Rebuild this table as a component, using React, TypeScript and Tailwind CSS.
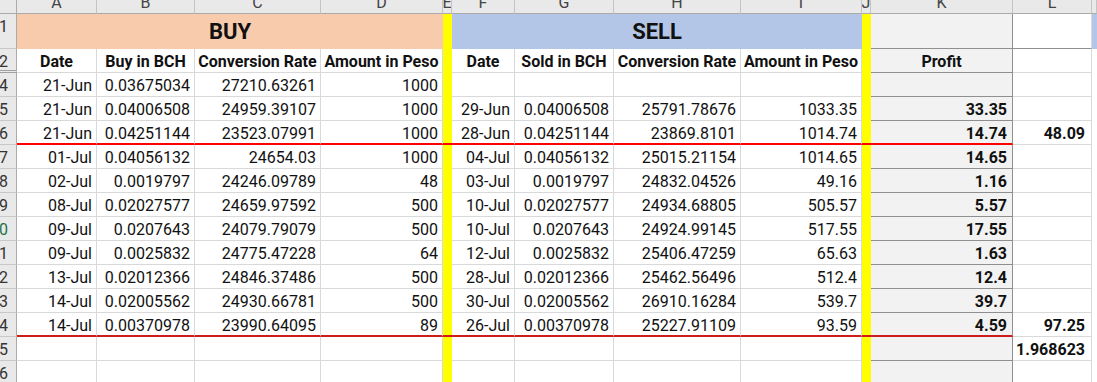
import React from "react";

type Row = { n: string; v: string[] };

// A, B, C, D, F, G, H, I, K, L
const rows: Row[] = [
  { n: "24", v: ["21-Jun", "0.03675034", "27210.63261", "1000", "", "", "", "", "", ""] },
  { n: "25", v: ["21-Jun", "0.04006508", "24959.39107", "1000", "29-Jun", "0.04006508", "25791.78676", "1033.35", "33.35", ""] },
  { n: "26", v: ["21-Jun", "0.04251144", "23523.07991", "1000", "28-Jun", "0.04251144", "23869.8101", "1014.74", "14.74", "48.09"] },
  { n: "27", v: ["01-Jul", "0.04056132", "24654.03", "1000", "04-Jul", "0.04056132", "25015.21154", "1014.65", "14.65", ""] },
  { n: "28", v: ["02-Jul", "0.0019797", "24246.09789", "48", "03-Jul", "0.0019797", "24832.04526", "49.16", "1.16", ""] },
  { n: "29", v: ["08-Jul", "0.02027577", "24659.97592", "500", "10-Jul", "0.02027577", "24934.68805", "505.57", "5.57", ""] },
  { n: "30", v: ["09-Jul", "0.0207643", "24079.79079", "500", "10-Jul", "0.0207643", "24924.99145", "517.55", "17.55", ""] },
  { n: "31", v: ["09-Jul", "0.0025832", "24775.47228", "64", "12-Jul", "0.0025832", "25406.47259", "65.63", "1.63", ""] },
  { n: "32", v: ["13-Jul", "0.02012366", "24846.37486", "500", "28-Jul", "0.02012366", "25462.56496", "512.4", "12.4", ""] },
  { n: "33", v: ["14-Jul", "0.02005562", "24930.66781", "500", "30-Jul", "0.02005562", "26910.16284", "539.7", "39.7", ""] },
  { n: "34", v: ["14-Jul", "0.00370978", "23990.64095", "89", "26-Jul", "0.00370978", "25227.91109", "93.59", "4.59", "97.25"] },
  { n: "35", v: ["", "", "", "", "", "", "", "", "", "1.968623"] },
  { n: "36", v: ["", "", "", "", "", "", "", "", "", ""] },
];

const letters = ["A", "B", "C", "D", "E", "F", "G", "H", "I", "J", "K", "L", ""];

// red separator lines under these rows
const redLine: Record<string, string> = {
  "26": "border-b-2 border-b-[#ff0000]",
  "34": "border-b-2 border-b-[#cc1c1c]",
};

const txt = "text-[16px] leading-[20px] pt-[3px] whitespace-nowrap overflow-hidden";

function RowHead({ n, cls = "" }: { n: string; cls?: string }) {
  return (
    <div
      className={`flex justify-end pr-[8px] bg-[#e9e9e9] border-r border-r-[#ababab] overflow-hidden ${txt} ${
        n === "30" ? "text-[#217346]" : "text-[#333]"
      } ${cls || "border-b border-b-[#c8c8c8]"}`}
    >
      <span>{n}</span>
    </div>
  );
}

function DataCell({ col, value, n }: { col: string; value: string; n: string }) {
  const red = redLine[n];
  if (col === "E" || col === "J") {
    return <div className={`bg-[#ffff00] ${red ?? ""}`} />;
  }
  if (col === "M") {
    return <div className="bg-white" />;
  }
  if (col === "K") {
    return (
      <div
        className={`bg-[#f2f2f2] border-r border-r-[#8f8f8f] text-right pr-[5px] font-bold text-[#111] ${txt} ${
          red ?? "border-b border-b-[#8f8f8f]"
        }`}
      >
        {value}
      </div>
    );
  }
  const bold = col === "L" ? "font-bold pr-[6px]" : "pr-[4px]";
  const bottom = col === "L" ? "border-b border-b-[#d9d9d9]" : red ?? "border-b border-b-[#d9d9d9]";
  return (
    <div className={`bg-white border-r border-r-[#d9d9d9] text-right text-[#111] ${bold} ${txt} ${bottom}`}>
      {value}
    </div>
  );
}

export default function App() {
  const cols = ["A", "B", "C", "D", "E", "F", "G", "H", "I", "J", "K", "L", "M"];
  const map = [0, 1, 2, 3, -1, 4, 5, 6, 7, -1, 8, 9, -1];

  const buyHeads = ["Date", "Buy in BCH", "Conversion Rate", "Amount in Peso"];
  const sellHeads = ["Date", "Sold in BCH", "Conversion Rate", "Amount in Peso"];
  const headCls = `bg-white border-r border-b border-r-[#d9d9d9] border-b-[#d9d9d9] text-center font-bold text-[#111] ${txt}`;

  return (
    <div className="w-[1097px] h-[382px] overflow-hidden bg-white font-['Roboto','Liberation_Sans',sans-serif]">
      <div className="grid grid-cols-[17px_80px_98px_126px_122px_9px_63px_99px_127px_121px_9px_142px_79px_5px] grid-rows-[14px_35px_24px] auto-rows-[24px]">
        {/* column letters */}
        <div className="bg-[#e9e9e9] border-r border-b border-r-[#ababab] border-b-[#ababab]" />
        {letters.map((l, i) => (
          <div
            key={i}
            className="bg-[#e9e9e9] border-r border-b border-r-[#c4c4c4] border-b-[#ababab] overflow-hidden flex justify-center"
          >
            <div className="-mt-[5px] leading-[16px] text-[16px] text-[#444]">{l}</div>
          </div>
        ))}

        {/* row 1: BUY / SELL */}
        <RowHead n="21" />
        <div className="col-span-4 bg-[#f8cbad] text-center text-[22px] font-bold text-[#111] leading-[32px] pt-[2px]">
          BUY
        </div>
        <div className="bg-[#ffff00]" />
        <div className="col-span-4 bg-[#b4c6e7] text-center text-[22px] font-bold text-[#111] leading-[32px] pt-[2px]">
          SELL
        </div>
        <div className="bg-[#ffff00]" />
        <div className="bg-[#f2f2f2] border-r border-b border-[#8f8f8f]" />
        <div className="bg-white border-r border-b border-r-[#d9d9d9] border-b-[#8f8f8f]" />
        <div className="bg-[#b4c6e7]" />

        {/* row 2: headers */}
        <RowHead n="22" cls="border-b-[3px] border-double border-b-[#a0a0a0]" />
        {buyHeads.map((h, i) => (
          <div key={"b" + i} className={headCls}>
            {h}
          </div>
        ))}
        <div className="bg-[#ffff00]" />
        {sellHeads.map((h, i) => (
          <div key={"s" + i} className={headCls}>
            {h}
          </div>
        ))}
        <div className="bg-[#ffff00]" />
        <div className={`bg-[#f2f2f2] border-r border-b border-r-[#8f8f8f] border-b-[#8f8f8f] text-center font-bold text-[#111] ${txt}`}>
          Profit
        </div>
        <div className="bg-white border-r border-b border-[#d9d9d9]" />
        <div className="bg-white" />

        {/* data rows */}
        {rows.map((r) => (
          <React.Fragment key={r.n}>
            <RowHead n={r.n} />
            {cols.map((c, i) => (
              <DataCell key={c} col={c} n={r.n} value={map[i] >= 0 ? r.v[map[i]] : ""} />
            ))}
          </React.Fragment>
        ))}
      </div>
    </div>
  );
}
